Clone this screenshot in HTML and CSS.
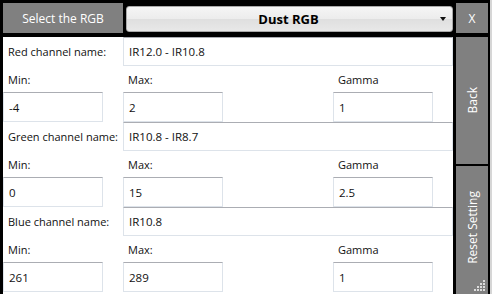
FILE: index.html
```html
<!DOCTYPE html>
<html lang="en">
<head>
<meta charset="UTF-8">
<title>Select the RGB</title>
<link rel="stylesheet" href="styles.css">
</head>
<body>

<div class="app">

<div class="topbar">
<div class="title-box">Select the RGB</div>
<div class="combo">
<span class="combo-text">Dust RGB</span>
<span class="combo-arrow"></span>
</div>
</div>

<div class="side-btn close">X</div>

<div class="panel">

<div class="channel">
<div class="label name-label">Red channel name:</div>
<div class="box wide">IR12.0 - IR10.8</div>
<div class="label">Min:</div>
<div class="label">Max:</div>
<div class="label">Gamma</div>
<div class="box">-4</div>
<div class="box">2</div>
<div class="box">1</div>
</div>

<div class="channel">
<div class="label name-label">Green channel name:</div>
<div class="box wide">IR10.8 - IR8.7</div>
<div class="label">Min:</div>
<div class="label">Max:</div>
<div class="label">Gamma</div>
<div class="box">0</div>
<div class="box">15</div>
<div class="box">2.5</div>
</div>

<div class="channel">
<div class="label name-label">Blue channel name:</div>
<div class="box wide">IR10.8</div>
<div class="label">Min:</div>
<div class="label">Max:</div>
<div class="label">Gamma</div>
<div class="box">261</div>
<div class="box">289</div>
<div class="box">1</div>
</div>

</div>

<div class="sidebar">
<div class="side-btn tall"><span class="vtext">Back</span></div>
<div class="side-btn tall reset">
<span class="vtext">Reset Setting</span>
<svg class="grip" width="11" height="11" viewBox="0 0 11 11">
<rect x="9" y="0" width="2" height="2"/>
<rect x="6" y="3" width="2" height="2"/><rect x="9" y="3" width="2" height="2"/>
<rect x="3" y="6" width="2" height="2"/><rect x="6" y="6" width="2" height="2"/><rect x="9" y="6" width="2" height="2"/>
<rect x="0" y="9" width="2" height="2"/><rect x="3" y="9" width="2" height="2"/><rect x="6" y="9" width="2" height="2"/><rect x="9" y="9" width="2" height="2"/>
</svg>
</div>
</div>

</div>

</body>
</html>
```

FILE: styles.css
```css
*{box-sizing:border-box;}

html,body{
margin:0;
background:#000;
}

body{
font-family:"Open Sans","Noto Sans",sans-serif;
font-size:11px;
color:#111;
}

.app{
width:492px;
height:294px;
display:grid;
grid-template-columns:450px 32px;
grid-template-rows:30px 1fr;
column-gap:3px;
row-gap:4px;
padding:3px 2px 0 3px;
border-right:2px solid #d6d6d6;
overflow:hidden;
}

.topbar{
display:flex;
gap:3px;
}

.title-box{
width:120px;
background:#808080;
color:#fff;
font-size:12px;
display:flex;
align-items:center;
justify-content:center;
}

.combo{
flex:1;
margin:3px 0 1px;
border:1px solid #a9a9a9;
border-radius:3px;
background:linear-gradient(#f5f5f5,#ececec 50%,#dfdfdf 51%,#e8e8e8);
display:flex;
align-items:center;
padding:0 6px 0 0;
}

.combo-text{
flex:1;
text-align:center;
font-weight:bold;
font-size:13px;
color:#000;
padding-left:10px;
}

.combo-arrow{
width:0;
height:0;
border-left:3.5px solid transparent;
border-right:3.5px solid transparent;
border-top:4px solid #111;
}

.side-btn{
background:#808080;
color:#fff;
font-size:12px;
display:flex;
align-items:center;
justify-content:center;
}

.panel{
background:#fff;
overflow:hidden;
}

.channel{
display:grid;
grid-template-columns:120px 210px 120px;
grid-template-rows:29px 26px 30px;
}

.label{
display:flex;
align-items:center;
padding-left:5px;
}

.box{
width:100px;
border:1px solid #dde3ea;
border-top-color:#abadb3;
display:flex;
align-items:center;
padding-left:5px;
font-size:11.5px;
}

.box.wide{
grid-column:2/4;
width:330px;
}

.sidebar{
display:flex;
flex-direction:column;
gap:2px;
}

.tall{
height:127px;
}

.reset{
flex:1;
position:relative;
padding-bottom:6px;
}

.vtext{
writing-mode:vertical-rl;
transform:rotate(180deg);
}

.grip{
position:absolute;
right:3px;
bottom:3px;
fill:#dcdcdc;
}
```
